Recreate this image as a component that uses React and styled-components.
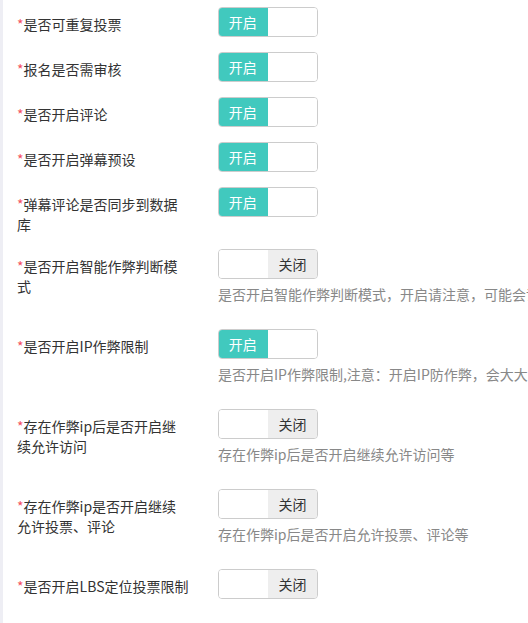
import React from 'react';
import styled, { createGlobalStyle } from 'styled-components';

const GlobalStyle = createGlobalStyle`
  html, body {
    margin: 0;
    padding: 0;
    background: #fff;
    overflow: hidden;
  }
  body {
    font-family: 'Noto Sans CJK SC', 'Liberation Sans', sans-serif;
    font-size: 14px;
    color: #333;
  }
`;

// 왼쪽 얇은 테두리가 있는 폼 전체
const Form = styled.div`
  border-left: 3px solid #eeeef4;
  padding: 7px 0 0 14px;
  min-height: 623px;
  box-sizing: border-box;
`;

const FormGroup = styled.div`
  display: flex;
  align-items: flex-start;
  margin-bottom: 15px;
`;

const Label = styled.label`
  width: 172px;
  flex: none;
  padding-top: 7px;
  margin-right: 29px;
  line-height: 20px;
  color: #333;
`;

const Required = styled.span`
  color: #f5515f;
`;

const Control = styled.div`
  display: flex;
  flex-direction: column;
  align-items: flex-start;
  min-width: 0;
`;

// 开启/关闭 스위치
const Switch = styled.div`
  display: flex;
  width: 100px;
  height: 30px;
  box-sizing: border-box;
  border: 1px solid #ccc;
  border-radius: 4px;
  overflow: hidden;
  cursor: pointer;
`;

const Half = styled.span`
  flex: 1;
  display: flex;
  align-items: center;
  justify-content: center;
  font-size: 14px;
  line-height: 28px;
  background: ${(p) => (p.$on ? '#41c9be' : p.$off ? '#eeeeee' : '#fff')};
  color: ${(p) => (p.$on ? '#fff' : '#333')};
  margin: ${(p) => (p.$on ? '-1px 0 -1px -1px' : '0')};
`;

const Help = styled.p`
  margin: 5px 0 10px;
  line-height: 20px;
  color: #888;
  white-space: nowrap;
`;

const rows = [
  { label: '是否可重复投票', on: true },
  { label: '报名是否需审核', on: true },
  { label: '是否开启评论', on: true },
  { label: '是否开启弹幕预设', on: true },
  { label: '弹幕评论是否同步到数据库', on: true },
  {
    label: '是否开启智能作弊判断模式',
    on: false,
    help: '是否开启智能作弊判断模式，开启请注意，可能会误判正常投票用户',
  },
  {
    label: '是否开启IP作弊限制',
    on: true,
    help: '是否开启IP作弊限制,注意：开启IP防作弊，会大大降低投票的参与人数',
  },
  {
    label: '存在作弊ip后是否开启继续允许访问',
    on: false,
    help: '存在作弊ip后是否开启继续允许访问等',
  },
  {
    label: '存在作弊ip是否开启继续允许投票、评论',
    on: false,
    help: '存在作弊ip后是否开启允许投票、评论等',
  },
  { label: '是否开启LBS定位投票限制', on: false },
];

const Toggle = ({ on }) => (
  <Switch>
    {on ? (
      <>
        <Half $on>开启</Half>
        <Half />
      </>
    ) : (
      <>
        <Half />
        <Half $off>关闭</Half>
      </>
    )}
  </Switch>
);

const App = () => {
  return (
    <>
      <GlobalStyle />
      <Form>
        {rows.map((row) => (
          <FormGroup key={row.label}>
            <Label>
              <Required>*</Required>
              {row.label}
            </Label>
            <Control>
              <Toggle on={row.on} />
              {row.help && <Help>{row.help}</Help>}
            </Control>
          </FormGroup>
        ))}
      </Form>
    </>
  );
};

export default App;
